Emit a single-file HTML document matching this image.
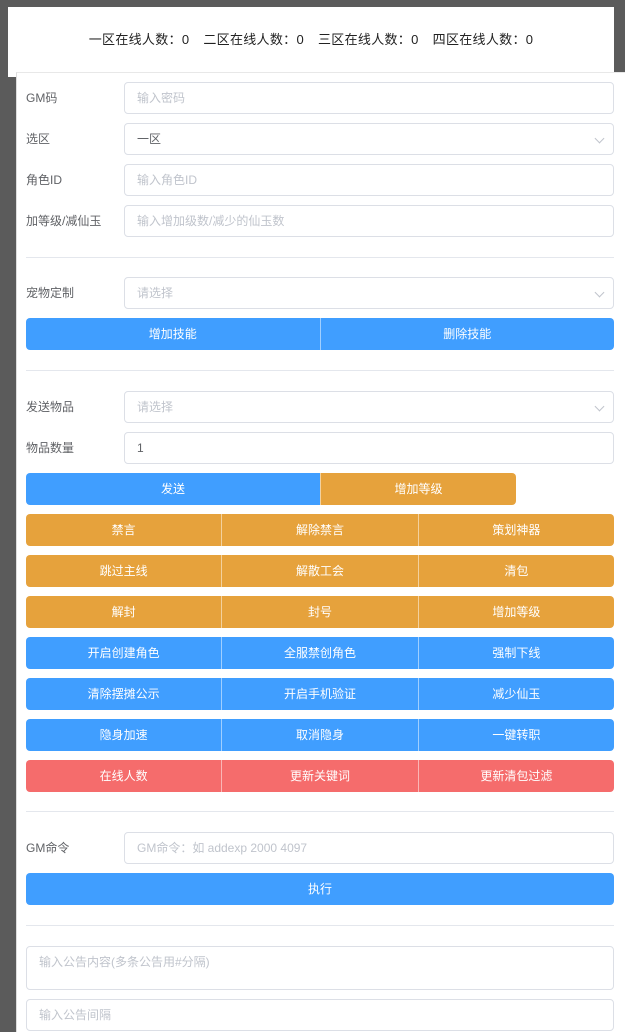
<!DOCTYPE html>
<html><head><meta charset="utf-8"><style>
*{box-sizing:border-box;margin:0;padding:0}
body{width:625px;height:1024px;overflow:hidden;background:#5b5b5b;font-family:"Liberation Sans","Noto Sans CJK SC",sans-serif;position:relative}
.top{position:absolute;left:8px;top:7px;width:606px;height:70px;background:#fff;text-align:center;font-size:13px;color:#222;padding-top:22px;white-space:nowrap}
.top span{margin:0 7px;letter-spacing:0.3px}
.card{position:absolute;left:16px;top:72px;width:609px;height:960px;background:#fff;border-left:1px solid #ddd;border-top:1px solid #e8e8e8}
.lbl{position:absolute;left:9px;font-size:12px;color:#606266;line-height:32px}
.in{position:absolute;left:107px;width:490px;height:32px;border:1px solid #dcdfe6;border-radius:4px;font-size:12px;color:#c0c4cc;line-height:30px;padding-left:12px}
.in.v{color:#606266}
.arr{position:absolute;right:10px;top:11px;width:7px;height:7px;border-right:1px solid #c0c4cc;border-bottom:1px solid #c0c4cc;transform:rotate(45deg)}
.hr{position:absolute;left:9px;width:588px;height:1px;background:#e4e7ed}
.row{position:absolute;left:9px;width:588px;height:32px;display:flex;border-radius:4px;overflow:hidden}
.row div{flex:1;color:#fff;font-size:12px;text-align:center;line-height:32px;border-left:1px solid rgba(255,255,255,.5)}
.row div:first-child{border-left:0}
.b{background:#409eff}.o{background:#e6a23c}.r{background:#f56c6c}
</style></head><body>
<div class="top"><span>一区在线人数：0</span><span>二区在线人数：0</span><span>三区在线人数：0</span><span>四区在线人数：0</span></div>
<div class="card">
<div class="lbl" style="top:9px">GM码</div><div class="in" style="top:9px">输入密码</div>
<div class="lbl" style="top:50px">选区</div><div class="in v" style="top:50px">一区<i class="arr"></i></div>
<div class="lbl" style="top:91px">角色ID</div><div class="in" style="top:91px">输入角色ID</div>
<div class="lbl" style="top:132px">加等级/减仙玉</div><div class="in" style="top:132px">输入增加级数/减少的仙玉数</div>
<div class="hr" style="top:184px"></div>
<div class="lbl" style="top:204px">宠物定制</div><div class="in" style="top:204px">请选择<i class="arr"></i></div>
<div class="row" style="top:245px"><div class="b">增加技能</div><div class="b">删除技能</div></div>
<div class="hr" style="top:297px"></div>
<div class="lbl" style="top:318px">发送物品</div><div class="in" style="top:318px">请选择<i class="arr"></i></div>
<div class="lbl" style="top:359px">物品数量</div><div class="in v" style="top:359px">1</div>
<div class="row" style="top:400px;width:490px"><div class="b" style="flex:0 0 294px">发送</div><div class="o">增加等级</div></div>
<div class="row" style="top:441px"><div class="o">禁言</div><div class="o">解除禁言</div><div class="o">策划神器</div></div>
<div class="row" style="top:482px"><div class="o">跳过主线</div><div class="o">解散工会</div><div class="o">清包</div></div>
<div class="row" style="top:523px"><div class="o">解封</div><div class="o">封号</div><div class="o">增加等级</div></div>
<div class="row" style="top:564px"><div class="b">开启创建角色</div><div class="b">全服禁创角色</div><div class="b">强制下线</div></div>
<div class="row" style="top:605px"><div class="b">清除摆摊公示</div><div class="b">开启手机验证</div><div class="b">减少仙玉</div></div>
<div class="row" style="top:646px"><div class="b">隐身加速</div><div class="b">取消隐身</div><div class="b">一键转职</div></div>
<div class="row" style="top:687px"><div class="r">在线人数</div><div class="r">更新关键词</div><div class="r">更新清包过滤</div></div>
<div class="hr" style="top:738px"></div>
<div class="lbl" style="top:759px">GM命令</div><div class="in" style="top:759px">GM命令：如 addexp 2000 4097</div>
<div class="row" style="top:800px"><div class="b">执行</div></div>
<div class="hr" style="top:852px"></div>
<div class="in" style="top:873px;left:9px;width:588px;height:44px">输入公告内容(多条公告用#分隔)</div>
<div class="in" style="top:926px;left:9px;width:588px;height:32px">输入公告间隔</div>
</div>
</body></html>
